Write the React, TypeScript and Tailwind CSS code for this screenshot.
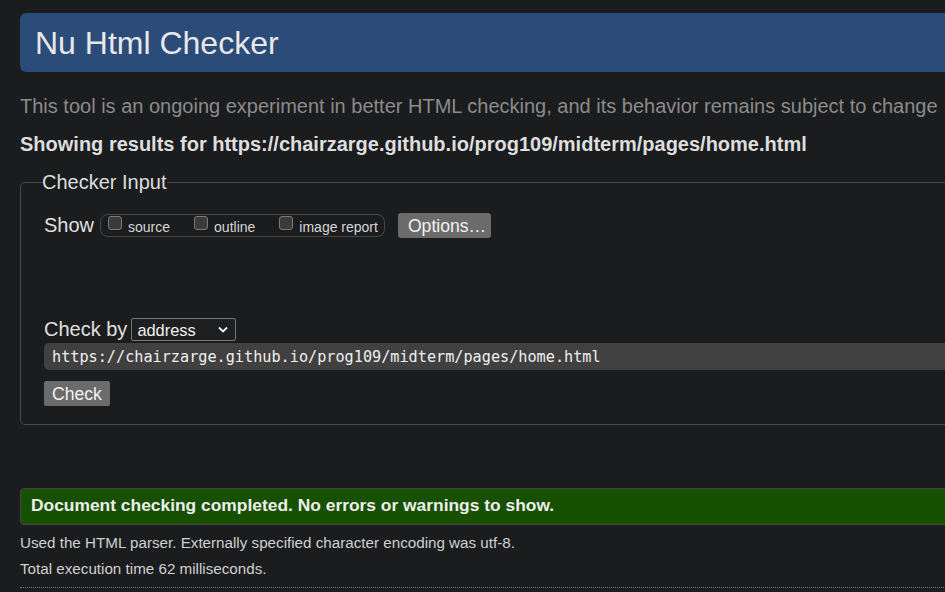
import React from "react";

function Box({ label, gap }: { label: string; gap?: boolean }) {
  return (
    <div className={"flex items-center " + (gap ? "ml-[24px]" : "")}>
      <span className="mb-[5px] h-[14px] w-[14px] rounded-[3px] border border-[#7a7a7a] bg-[#3b3b3b]" />
      <span className="ml-[6px] mt-[2px] text-[14px] leading-[16px] text-[#d6d6d6]">{label}</span>
    </div>
  );
}

export default function App() {
  return (
    <div className="h-[592px] w-[945px] overflow-hidden bg-[#1b1c1e] font-['Liberation_Sans',Arial,sans-serif]">
      <div className="w-[1150px] pl-[20px] pt-[13px]">
        <header className="flex h-[59px] items-center rounded-[6px] bg-[#2b4b78] pl-[15px] text-[32px] leading-[32px] text-[#e8e8e8]">
          Nu Html Checker
        </header>

        <p className="mt-[24px] h-[20px] whitespace-nowrap text-[20px] leading-[20px] text-[#8b8b8b]">
          This tool is an ongoing experiment in better HTML checking, and its behavior remains subject to change
        </p>

        <p className="mt-[18px] h-[20px] whitespace-nowrap text-[20px] font-bold leading-[20px] text-[#dedede]">
          Showing results for https://chairzarge.github.io/prog109/midterm/pages/home.html
        </p>

        <fieldset className="mt-[18px] rounded-[5px] border border-[#4a4a4a] pb-[18px] pl-[23px]">
          <legend className="ml-[-2px] text-[20px] leading-[20px] text-[#dedede]">Checker Input</legend>

          <div className="mt-[21px] flex h-[25px] items-center">
            <span className="mb-[2px] text-[20px] leading-[20px] text-[#e0e0e0]">Show</span>
            <div className="ml-[6px] flex h-[23px] items-center rounded-[8px] border border-[#464646] pl-[7px] pr-[6px]">
              <Box label="source" />
              <Box label="outline" gap />
              <Box label="image report" gap />
            </div>
            <button className="ml-[13px] h-[25px] w-[93px] rounded-[3px] bg-[#6b6b6b] pl-[10px] text-left text-[17.6px] leading-[20px] text-[#f2f2f2]">
              Options…
            </button>
          </div>

          <div className="mt-[80px] flex h-[23px] items-center">
            <span className="mb-[2px] text-[20px] leading-[20px] text-[#e0e0e0]">Check by</span>
            <div className="ml-[4px] flex h-[23px] w-[105px] items-center justify-between rounded-[2px] border border-[#767676] bg-[#1e1f21] pl-[5px] pr-[7px]">
              <span className="text-[16.4px] leading-[18px] text-[#f2f2f2]">address</span>
              <svg width="10" height="7" viewBox="0 0 10 7" fill="none">
                <path d="M1 1.5 L5 5.5 L9 1.5" stroke="#f0f0f0" strokeWidth="1.8" />
              </svg>
            </div>
          </div>

          <div className="mt-[2px] flex h-[27px] items-center rounded-[5px] bg-[#404040] pl-[8px] font-['DejaVu_Sans_Mono',monospace] text-[15.2px] leading-[18px] text-[#f0f0f0]">
            https://chairzarge.github.io/prog109/midterm/pages/home.html
          </div>

          <button className="mt-[11px] flex h-[25px] w-[66px] items-center rounded-[2px] bg-[#6b6b6b] pl-[8px] text-[17.6px] leading-[20px] text-[#f2f2f2]">
            Check
          </button>
        </fieldset>

        <div className="mt-[63px] h-[37px] rounded-[4px] border border-[#444444] bg-[#175000] pl-[10px] pt-[6px] text-[17.4px] font-bold leading-[20px] text-[#eeeeee]">
          Document checking completed. No errors or warnings to show.
        </div>

        <p className="mt-[8px] h-[20px] text-[15.2px] leading-[20px] text-[#d0d0d0]">
          Used the HTML parser. Externally specified character encoding was utf-8.
        </p>
        <p className="mt-[6px] h-[20px] text-[15.2px] leading-[20px] text-[#d0d0d0]">
          Total execution time 62 milliseconds.
        </p>
        <div className="mt-[8px] border-t border-dotted border-[#777777]" />
      </div>
    </div>
  );
}
